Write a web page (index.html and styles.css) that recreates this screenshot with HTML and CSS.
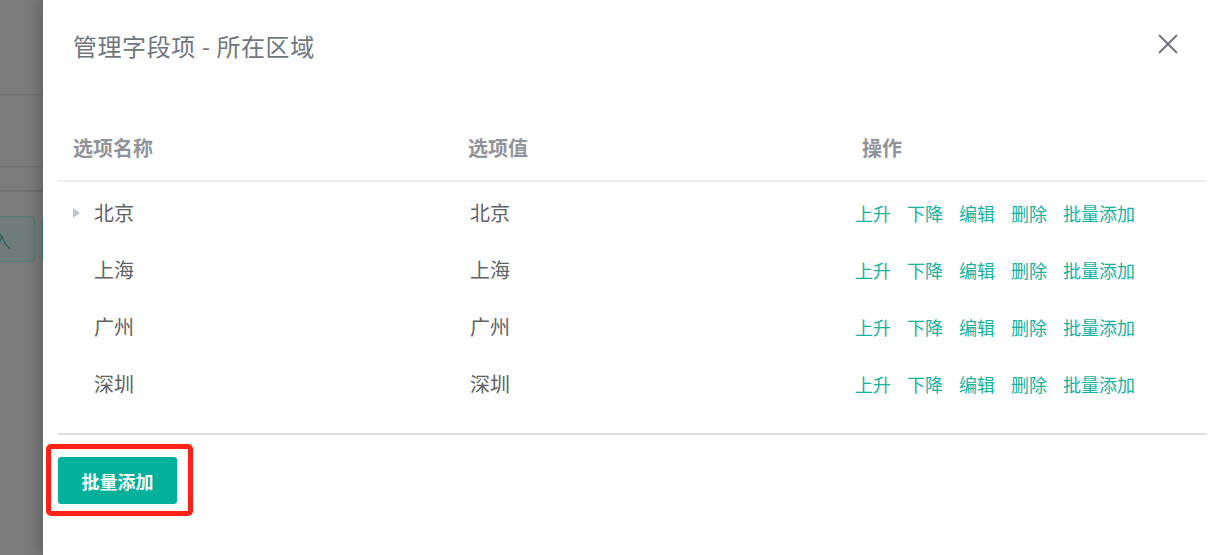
FILE: index.html
```html
<!DOCTYPE html>
<html lang="zh-CN">
<head>
<meta charset="utf-8">
<title>管理字段项 - 所在区域</title>
<link rel="stylesheet" href="styles.css">
</head>
<body>
<div class="page">
  <div class="backdrop">
    <div class="bg-topbar"></div>
    <div class="bg-tabs"></div>
    <div class="bg-toolbar">
      <span class="bg-btn">导入</span>
      <span class="bg-btn second"></span>
    </div>
  </div>
  <aside class="drawer">
    <header class="drawer-header">
      <h1 class="drawer-title">管理字段项 - 所在区域</h1>
      <button class="close-btn" aria-label="关闭">
        <svg width="20" height="20" viewBox="0 0 20 20"><path d="M1 1 L19 19 M19 1 L1 19" stroke="#70747a" stroke-width="2" fill="none"/></svg>
      </button>
    </header>
    <div class="table">
      <div class="row head">
        <div class="cell c1">选项名称</div>
        <div class="cell c2">选项值</div>
        <div class="cell c3">操作</div>
      </div>
      <div class="tbody">
        <div class="row">
          <div class="cell c1"><span class="caret"></span>北京</div>
          <div class="cell c2">北京</div>
          <div class="cell c3 ops"><a>上升</a><a>下降</a><a>编辑</a><a>删除</a><a>批量添加</a></div>
        </div>
        <div class="row">
          <div class="cell c1"><span class="caret hidden"></span>上海</div>
          <div class="cell c2">上海</div>
          <div class="cell c3 ops"><a>上升</a><a>下降</a><a>编辑</a><a>删除</a><a>批量添加</a></div>
        </div>
        <div class="row">
          <div class="cell c1"><span class="caret hidden"></span>广州</div>
          <div class="cell c2">广州</div>
          <div class="cell c3 ops"><a>上升</a><a>下降</a><a>编辑</a><a>删除</a><a>批量添加</a></div>
        </div>
        <div class="row">
          <div class="cell c1"><span class="caret hidden"></span>深圳</div>
          <div class="cell c2">深圳</div>
          <div class="cell c3 ops"><a>上升</a><a>下降</a><a>编辑</a><a>删除</a><a>批量添加</a></div>
        </div>
      </div>
    </div>
    <footer class="drawer-footer">
      <button class="primary-btn">批量添加</button>
      <div class="highlight"></div>
    </footer>
  </aside>
</div>
</body>
</html>
```
FILE: styles.css
```css
* { box-sizing: border-box; }
html, body { margin: 0; padding: 0; }
body {
  font-family: "Noto Sans CJK SC", "Noto Sans", sans-serif;
  width: 1217px;
  height: 555px;
  overflow: hidden;
  background: #7a7a7a;
}
.page {
  display: flex;
  height: 555px;
}
.backdrop {
  width: 43px;
  flex: none;
  background: #7b7b7b;
  overflow: hidden;
  display: flex;
  flex-direction: column;
}
.bg-topbar {
  height: 95px;
  border-bottom: 1px solid #727272;
}
.bg-tabs {
  height: 72px;
  border-bottom: 1px solid #727272;
}
.bg-toolbar {
  margin-top: 23px;
  border-top: 2px solid #6f6f73;
  padding-top: 24px;
  display: flex;
  gap: 7px;
}
.bg-btn {
  flex: none;
  width: 64px;
  height: 46px;
  margin-left: -29px;
  border: 1px solid #4f7f75;
  border-radius: 4px;
  background: #6f7c79;
  color: #0d5a4f;
  font-size: 19px;
  font-weight: 300;
  display: flex;
  align-items: center;
  justify-content: flex-end;
  padding-right: 23px;
  white-space: nowrap;
  overflow: hidden;
}
.bg-btn.second {
  margin-left: 0;
  border-color: #2f8a78;
}
.drawer {
  flex: 1;
  background: #fff;
  box-shadow: -6px 0 12px rgba(0,0,0,0.18);
  display: flex;
  flex-direction: column;
  position: relative;
}
.drawer-header {
  height: 90px;
  display: flex;
  align-items: center;
  justify-content: space-between;
  padding: 0 39px 0 30px;
}
.drawer-title {
  margin: 0;
  font-size: 24px;
  font-weight: normal;
  letter-spacing: 0.55px;
  color: #71767e;
}
.close-btn {
  border: 0;
  background: none;
  padding: 0;
  width: 20px;
  height: 20px;
  margin-top: -2px;
  display: flex;
}
.table {
  margin: 25px 10px 0 15px;
}
.row {
  display: flex;
  align-items: center;
  height: 57px;
}
.row.head {
  height: 67px;
  border-bottom: 2px solid #ebeef2;
  font-weight: bold;
  color: #909399;
  font-size: 20px;
}
.tbody {
  padding: 2px 0 21px;
  border-bottom: 2px solid #dcdfe4;
  font-size: 20px;
  color: #606266;
}
.cell {
  padding-left: 15px;
  display: flex;
  align-items: center;
}
.c1 { width: 395px; }
.c2 { width: 394px; }
.c3 { flex: 1; }
.tbody .c2 { padding-left: 17px; }
.ops {
  padding-left: 8px;
  gap: 16px;
  font-size: 18px;
}
.ops a {
  color: #15b2a0;
  cursor: pointer;
}
.caret {
  width: 0;
  height: 0;
  border-top: 5.5px solid transparent;
  border-bottom: 5.5px solid transparent;
  border-left: 7px solid #c0c4cc;
  margin-right: 14px;
}
.caret.hidden { visibility: hidden; }
.drawer-footer {
  position: relative;
  padding: 22px 15px;
}
.primary-btn {
  width: 119px;
  height: 47px;
  border: 0;
  border-radius: 3px;
  background: #00b09b;
  color: #fff;
  font-family: inherit;
  font-size: 18px;
  font-weight: bold;
}
.highlight {
  position: absolute;
  left: 3px;
  top: 9px;
  width: 147px;
  height: 72px;
  border: 5px solid #ff2216;
  border-radius: 5px;
  pointer-events: none;
}
```
